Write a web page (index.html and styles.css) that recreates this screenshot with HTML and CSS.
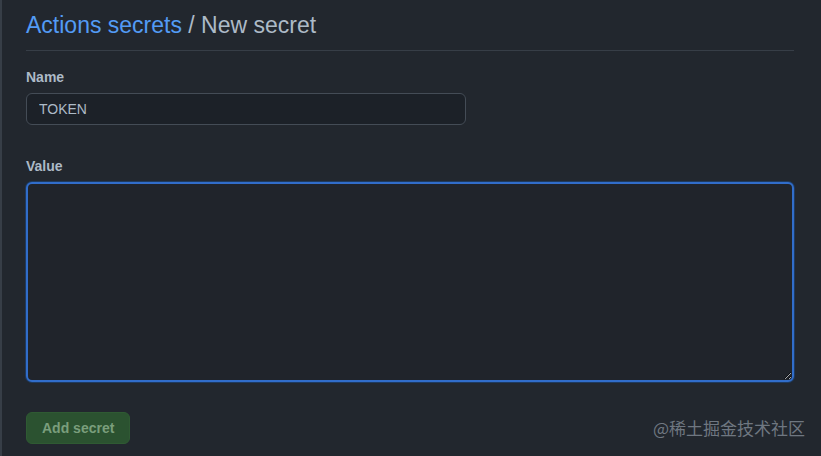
FILE: index.html
```html
<!DOCTYPE html>
<html lang="en">
<head>
<meta charset="utf-8">
<link rel="stylesheet" href="styles.css">
</head>
<body>
<div class="page">
  <div class="content">
    <h2 class="title"><a class="crumb" href="#">Actions secrets</a> / New secret</h2>
    <form class="form">
      <div class="field">
        <label class="label">Name</label>
        <input class="input" type="text" value="TOKEN">
      </div>
      <div class="field field-value">
        <label class="label">Value</label>
        <textarea class="textarea"></textarea>
      </div>
      <button class="btn" type="button" disabled>Add secret</button>
    </form>
  </div>
  <div class="watermark">@稀土掘金技术社区</div>
</div>
</body>
</html>
```
FILE: styles.css
```css
html, body {
  margin: 0;
  padding: 0;
  background: #22272e;
}
body {
  width: 821px;
  height: 456px;
  overflow: hidden;
  font-family: "Liberation Sans", Arial, sans-serif;
  color: #adbac7;
}
.page {
  position: relative;
  height: 456px;
  box-sizing: border-box;
  border-left: 2px solid #373e47;
  padding-left: 24px;
  padding-right: 27px;
}
.title {
  margin: 0;
  padding-top: 10px;
  padding-bottom: 10px;
  font-size: 23px;
  font-weight: 400;
  line-height: 30px;
  color: #adbac7;
  border-bottom: 1px solid #373e47;
}
.crumb {
  color: #539bf5;
  text-decoration: none;
}
.form {
  display: flex;
  flex-direction: column;
  align-items: flex-start;
  padding-top: 17px;
}
.field {
  display: flex;
  flex-direction: column;
  width: 100%;
}
.field-value {
  margin-top: 32px;
}
.label {
  font-size: 14px;
  font-weight: 700;
  line-height: 18px;
  color: #adbac7;
  margin-bottom: 7px;
}
.input {
  width: 440px;
  height: 32px;
  box-sizing: border-box;
  background: #1c2128;
  border: 1px solid #444c56;
  border-radius: 6px;
  padding: 0 12px;
  font-family: "Liberation Sans", Arial, sans-serif;
  font-size: 14px;
  color: #adbac7;
  outline: none;
}
.textarea {
  width: 768px;
  height: 200px;
  box-sizing: border-box;
  background: #20242b;
  border: 2px solid #316dca;
  border-radius: 6px;
  box-shadow: 0 0 0 1px #1e3a5f;
  resize: vertical;
  outline: none;
}
.btn {
  margin-top: 30px;
  height: 32px;
  padding: 0 15px;
  background: #2b5230;
  border: 1px solid #2f5a33;
  border-radius: 6px;
  font-family: "Liberation Sans", Arial, sans-serif;
  font-size: 14px;
  font-weight: 700;
  color: #7a9e7c;
}
.watermark {
  position: absolute;
  right: 16px;
  bottom: 16px;
  font-family: "Noto Sans CJK SC", sans-serif;
  font-size: 17px;
  color: #7d8590;
  opacity: 0.85;
}
```
